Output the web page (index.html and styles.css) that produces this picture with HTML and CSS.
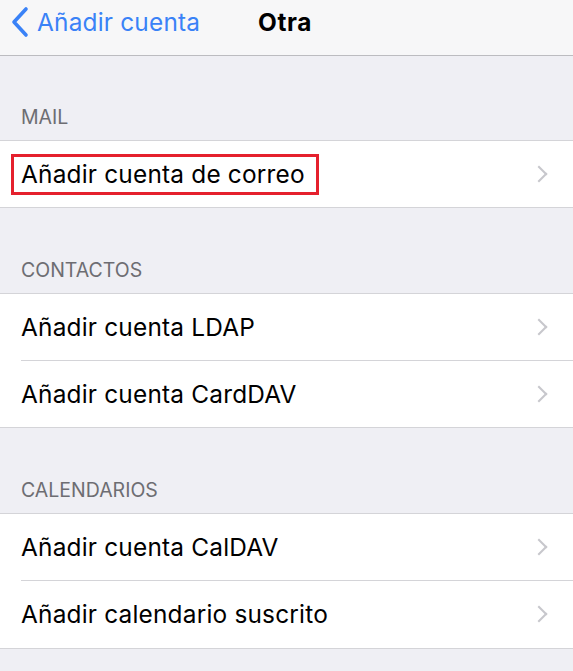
FILE: index.html
```html
<!DOCTYPE html>
<html lang="es">
<head>
<meta charset="utf-8">
<title>Otra</title>
<link rel="stylesheet" href="styles.css">
</head>
<body>
<header class="nav">
  <a class="back" href="#">
    <svg class="back-chevron" width="22" height="32" viewBox="0 0 22 32"><path d="M17 3 L5 16 L17 29" fill="none" stroke="#3a82f7" stroke-width="3.6" stroke-linecap="round" stroke-linejoin="round"/></svg>
    <span>Añadir cuenta</span>
  </a>
  <h1 class="title">Otra</h1>
</header>
<main>
  <section class="section">
    <div class="section-header">MAIL</div>
    <ul class="group">
      <li class="row"><span class="label highlighted">Añadir cuenta de correo</span><span class="chev"></span></li>
    </ul>
  </section>
  <section class="section">
    <div class="section-header">CONTACTOS</div>
    <ul class="group">
      <li class="row"><span class="label">Añadir cuenta LDAP</span><span class="chev"></span></li>
      <li class="row"><span class="label">Añadir cuenta CardDAV</span><span class="chev"></span></li>
    </ul>
  </section>
  <section class="section">
    <div class="section-header">CALENDARIOS</div>
    <ul class="group">
      <li class="row"><span class="label">Añadir cuenta CalDAV</span><span class="chev"></span></li>
      <li class="row"><span class="label">Añadir calendario suscrito</span><span class="chev"></span></li>
    </ul>
  </section>
</main>
</body>
</html>
```
FILE: styles.css
```css
* { box-sizing: border-box; }
html, body { margin: 0; padding: 0; }
body {
  background: #efeff4;
  font-family: Inter, "Liberation Sans", sans-serif;
  color: #000;
  width: 573px;
  height: 671px;
  overflow: hidden;
}
.nav {
  position: relative;
  height: 56px;
  background: #f7f7f8;
  border-bottom: 1px solid #bcbcc0;
  display: flex;
  align-items: center;
  justify-content: center;
}
.back {
  position: absolute;
  left: 9px;
  top: 6px;
  display: flex;
  align-items: center;
  gap: 6px;
  color: #3a82f7;
  text-decoration: none;
  font-size: 24.4px;
  letter-spacing: 0.2px;
  line-height: 32px;
}
.back-chevron { display: block; }
.title {
  margin: 0;
  font-size: 24.4px;
  font-weight: 700;
  letter-spacing: 0.6px;
  line-height: 32px;
  margin-top: -12px;
  margin-left: -3px;
}
.section-header {
  height: 84.8px;
  display: flex;
  align-items: flex-end;
  padding: 0 21px 11px;
  font-size: 19.5px;
  line-height: 24px;
  color: #6d6d72;
}
.section:first-child .section-header { height: 84px; }
.group {
  list-style: none;
  margin: 0;
  padding: 0;
  background: #fff;
  border-top: 1px solid #d4d4d8;
  border-bottom: 1px solid #d4d4d8;
}
.row {
  position: relative;
  height: 66.2px;
  display: flex;
  align-items: center;
  justify-content: space-between;
  padding: 0 24px 0 21px;
  font-size: 24.4px;
  letter-spacing: 0.2px;
}
.row + .row::before {
  content: "";
  position: absolute;
  left: 21px;
  right: 0;
  top: -1px;
  height: 1px;
  background: #d4d4d8;
}
.row + .row { margin-top: 1px; }
.label { display: inline-block; line-height: 29px; }
.highlighted {
  border: 3px solid #e5202d;
  padding: 3px 11px 3px 7px;
  margin: 0 0 0 -10px;
}
.chev {
  width: 12px;
  height: 12px;
  border-top: 2.4px solid #c7c7cc;
  border-right: 2.4px solid #c7c7cc;
  transform: rotate(45deg);
  margin-right: 4px;
}
```
